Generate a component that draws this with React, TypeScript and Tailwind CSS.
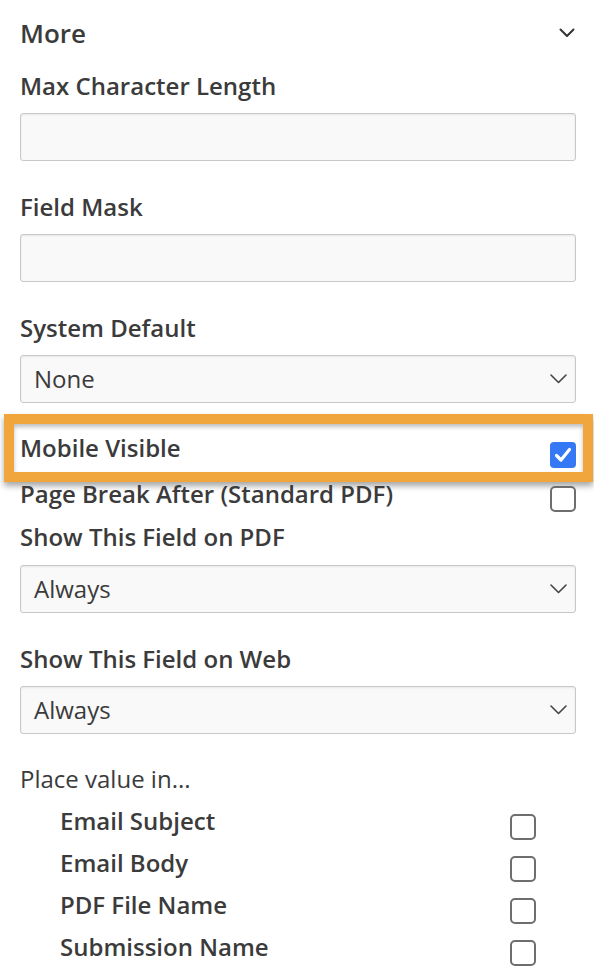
import React from 'react';

function Chevron({ className = '' }: { className?: string }) {
  return (
    <svg width="17" height="10" viewBox="0 0 17 10" className={className} fill="none">
      <polyline points="1,1 8.5,8.5 16,1" stroke="#444" strokeWidth="1.6" strokeLinecap="round" strokeLinejoin="round" />
    </svg>
  );
}

function Box({ checked = false }: { checked?: boolean }) {
  if (checked) {
    return (
      <span className="flex items-center justify-center w-[26px] h-[26px] rounded-[4px] bg-[#3478f6] shrink-0">
        <svg width="18" height="16" viewBox="0 0 18 16" fill="none">
          <polyline points="2.5,8.5 7,13 15.5,2.5" stroke="#fff" strokeWidth="3.2" strokeLinecap="round" strokeLinejoin="round" />
        </svg>
      </span>
    );
  }
  return <span className="block w-[26px] h-[26px] rounded-[5px] border-2 border-[#6e6e6e] bg-white shrink-0" />;
}

function Label({ children, className = '' }: { children: React.ReactNode; className?: string }) {
  return <div className={`text-[24px] leading-[30px] font-semibold ${className}`}>{children}</div>;
}

function TextInput({ className = '' }: { className?: string }) {
  return (
    <div className={`h-[48px] rounded-[3px] border border-[#c8c8c8] bg-[#f9f9f9] shadow-[inset_0_1px_2px_rgba(0,0,0,0.08)] ${className}`} />
  );
}

function Select({ value, className = '' }: { value: string; className?: string }) {
  return (
    <div className={`h-[48px] rounded-[3px] border border-[#c8c8c8] bg-[#f9f9f9] shadow-[inset_0_1px_2px_rgba(0,0,0,0.08)] flex items-center justify-between pl-[13px] pr-[8px] ${className}`}>
      <span className="text-[24px] leading-none">{value}</span>
      <Chevron />
    </div>
  );
}

export default function App() {
  const places = ['Email Subject', 'Email Body', 'PDF File Name', 'Submission Name'];

  return (
    <div className="w-[594px] h-[970px] overflow-hidden bg-white text-[#3b3b3b] font-['Open_Sans',sans-serif] pl-5 pr-[18px]">
      {/* header */}
      <div className="flex items-center justify-between h-[66px]">
        <span className="text-[26px] font-semibold">More</span>
        <svg width="16" height="10" viewBox="0 0 16 10" fill="none" className="mr-[1px]">
          <polyline points="1.5,1.5 8,8 14.5,1.5" stroke="#333" strokeWidth="2" strokeLinecap="round" strokeLinejoin="round" />
        </svg>
      </div>

      <Label className="mt-[5px]">Max Character Length</Label>
      <TextInput className="mt-[12px]" />

      <Label className="mt-[31px]">Field Mask</Label>
      <TextInput className="mt-[12px]" />

      <Label className="mt-[31px]">System Default</Label>
      <Select value="None" className="mt-[12px]" />

      {/* highlighted row */}
      <div className="mt-[11px] -ml-4 -mr-[17px] border-[10px] border-[#f0a63c] shadow-[0_4px_6px_rgba(0,0,0,0.35)]">
        <div className="h-[48px] bg-white shadow-[inset_0_3px_4px_rgba(0,0,0,0.25)] flex items-start justify-between pl-[6px] pr-[7px]">
          <span className="text-[24px] leading-[22px] font-semibold mt-[13px]">Mobile Visible</span>
          <span className="mt-[18px]">
            <Box checked />
          </span>
        </div>
      </div>

      <div className="mt-[1px] flex items-start justify-between">
        <span className="text-[24px] leading-[22px] font-semibold">Page Break After (Standard PDF)</span>
        <span className="mt-[3px]">
          <Box />
        </span>
      </div>

      <Label className="mt-[10px]">Show This Field on PDF</Label>
      <Select value="Always" className="mt-[13px]" />

      <Label className="mt-[31px]">Show This Field on Web</Label>
      <Select value="Always" className="mt-[12px]" />

      <div className="mt-[30px] text-[24px] leading-[30px] font-medium">Place value in...</div>

      <div className="mt-[16px] pl-10 pr-10">
        {places.map((p) => (
          <div key={p} className="h-[42px] flex items-start justify-between">
            <span className="text-[24px] leading-[22px] font-semibold">{p}</span>
            <span className="mt-[4px]">
              <Box />
            </span>
          </div>
        ))}
      </div>
    </div>
  );
}
